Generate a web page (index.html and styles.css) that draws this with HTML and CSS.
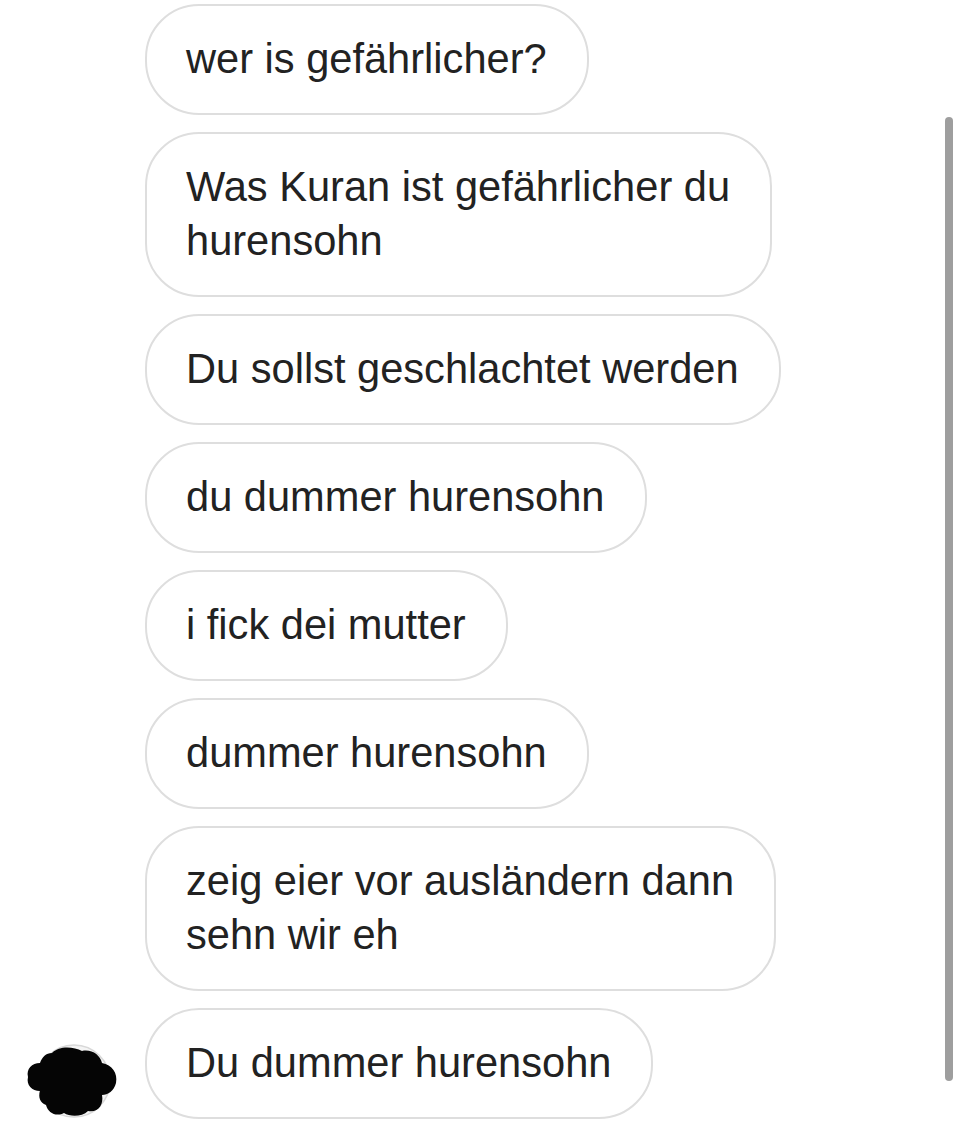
FILE: index.html
```html
<!DOCTYPE html>
<html lang="de">
<head>
    <meta charset="UTF-8">
    <meta name="viewport" content="width=device-width, initial-scale=1.0">
    <title>Nachrichten</title>
    <link rel="stylesheet" href="styles.css">
</head>
<body>
    <div class="thread">
        <div class="row">
            <div class="avatar-slot"></div>
            <div class="bubble">wer is gefährlicher?</div>
        </div>
        <div class="row">
            <div class="avatar-slot"></div>
            <div class="bubble">Was Kuran ist gefährlicher du<br>hurensohn</div>
        </div>
        <div class="row">
            <div class="avatar-slot"></div>
            <div class="bubble">Du sollst geschlachtet werden</div>
        </div>
        <div class="row">
            <div class="avatar-slot"></div>
            <div class="bubble">du dummer hurensohn</div>
        </div>
        <div class="row">
            <div class="avatar-slot"></div>
            <div class="bubble">i fick dei mutter</div>
        </div>
        <div class="row">
            <div class="avatar-slot"></div>
            <div class="bubble">dummer hurensohn</div>
        </div>
        <div class="row">
            <div class="avatar-slot"></div>
            <div class="bubble">zeig eier vor ausländern dann<br>sehn wir eh</div>
        </div>
        <div class="row">
            <div class="avatar-slot">
                <svg class="avatar" width="100" height="76" viewBox="0 0 100 76">
                    <circle cx="52" cy="38" r="36" fill="#f4f4f4" stroke="#d8d8d8" stroke-width="1.5"/>
                    <path d="M30 10 C38 2 52 4 60 8 C70 6 78 12 80 20 C90 22 96 30 94 40 C92 48 86 52 80 52 C82 62 76 70 66 68 C60 74 48 74 42 70 C34 74 26 70 24 62 C18 60 16 54 18 48 C10 48 4 42 6 34 C4 26 10 20 18 20 C20 14 24 10 30 10 Z" fill="#050505"/>
                </svg>
            </div>
            <div class="bubble">Du dummer hurensohn</div>
        </div>
    </div>
    <div class="scrollbar"></div>
</body>
</html>
```

FILE: styles.css
```css
body{
    margin: 0;
    background-color: #ffffff;
    font-family: "Liberation Sans", Arial, sans-serif;
    color: #222222;
}
.thread{
    display: flex;
    flex-direction: column;
    gap: 17px;
    padding-top: 4px;
}
.row{
    display: flex;
    align-items: flex-end;
}
.avatar-slot{
    width: 145px;
    flex-shrink: 0;
    display: flex;
    align-items: flex-end;
}
.avatar{
    display: block;
    margin-left: 22px;
    margin-bottom: 0;
}
.bubble{
    border: 2px solid #dedede;
    border-radius: 54px;
    padding: 26px 40px 27px 39px;
    font-size: 41.6px;
    line-height: 54px;
    white-space: nowrap;
}
.scrollbar{
    position: absolute;
    top: 117px;
    left: 945px;
    width: 8px;
    height: 964px;
    border-radius: 4px;
    background-color: #9e9e9e;
}
```
